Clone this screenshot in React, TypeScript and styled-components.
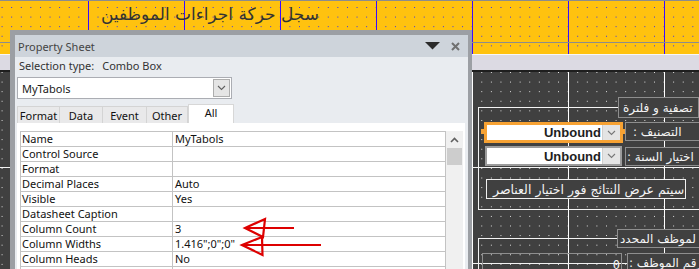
import React from "react";
import styled, { createGlobalStyle } from "styled-components";

const Global = createGlobalStyle`
  html, body { margin: 0; padding: 0; background: #404040; }
  body { width: 699px; height: 269px; overflow: hidden; }
  #root { width: 699px; height: 269px; }
`;

const UI = `"Noto Sans", "Open Sans", "DejaVu Sans", sans-serif`;
const AR = `"DejaVu Sans", "Noto Sans", sans-serif`;

const Stage = styled.div`
  position: relative;
  width: 699px;
  height: 269px;
  overflow: hidden;
  display: flex;
  flex-direction: column;
  font-family: ${UI};
`;

/* ---------- Access design surface ---------- */

const HeaderBand = styled.div`
  position: relative;
  flex: none;
  height: 54px;
  background-color: #ffc20f;
  background-image:
    linear-gradient(#8c8c8c, #8c8c8c),
    linear-gradient(#8c8c8c, #8c8c8c),
    linear-gradient(to right, #3a0cff 1px, transparent 1px),
    conic-gradient(from 270deg at 1px 1px, #2a2aff 90deg, transparent 0);
  background-size: 100% 1px, 100% 1px, 96px 100%, 9.6px 9.6px;
  background-position: 0 0, 0 42px, 88px 0, -8px 7px;
  background-repeat: no-repeat, no-repeat, repeat-x, repeat;
`;

const ReportTitle = styled.div`
  position: absolute;
  left: 96px;
  top: 4px;
  width: 228px;
  direction: rtl;
  text-align: center;
  font-family: ${AR};
  font-size: 17px;
  color: #333333;
  white-space: nowrap;
`;

const SectionBar = styled.div`
  flex: none;
  height: 15px;
  background: #dcdae3;
  border-top: 1px solid #f7f7f9;
  border-bottom: 2px solid #1e1e1e;
`;

const Detail = styled.div`
  position: relative;
  flex: 1;
  background-color: #404040;
  background-image:
    linear-gradient(to right, #ffffff 1px, transparent 1px),
    conic-gradient(from 270deg at 1px 1px, #e8e8e8 90deg, transparent 0);
  background-size: 96px 100%, 9.6px 9.6px;
  background-position: 88px 0, -8px 0px;
  background-repeat: repeat-x, repeat;
`;

const FrameBox = styled.div<{ $x: number; $y: number; $w: number; $h: number }>`
  position: absolute;
  left: ${(p) => p.$x}px;
  top: ${(p) => p.$y}px;
  width: ${(p) => p.$w}px;
  height: ${(p) => p.$h}px;
  border: 1px solid #f4f4f4;
  box-sizing: border-box;
`;

const HLine = styled.div<{ $x: number; $y: number; $w: number }>`
  position: absolute;
  left: ${(p) => p.$x}px;
  top: ${(p) => p.$y}px;
  width: ${(p) => p.$w}px;
  height: 1px;
  background: #f4f4f4;
`;

const CanvasLabel = styled.div<{
  $x: number;
  $y: number;
  $w: number;
  $h: number;
  $pad: number;
  $size?: number;
  $bright?: boolean;
}>`
  position: absolute;
  left: ${(p) => p.$x}px;
  top: ${(p) => p.$y}px;
  width: ${(p) => p.$w}px;
  height: ${(p) => p.$h}px;
  box-sizing: border-box;
  border: 1px solid ${(p) => (p.$bright ? "#f0f0f0" : "#8e8e8e")};
  background: #404040;
  display: flex;
  align-items: center;
  justify-content: flex-start;
  padding-left: ${(p) => p.$pad}px;
  font-family: ${AR};
  font-size: ${(p) => p.$size ?? 12}px;
  color: #f4f4f4;
  white-space: nowrap;
  overflow: hidden;
  direction: ltr;
  span { direction: rtl; unicode-bidi: isolate; }
`;

const CanvasCombo = styled.div<{
  $x: number;
  $y: number;
  $w: number;
  $h: number;
  $selected?: boolean;
}>`
  position: absolute;
  left: ${(p) => p.$x}px;
  top: ${(p) => p.$y}px;
  width: ${(p) => p.$w}px;
  height: ${(p) => p.$h}px;
  box-sizing: border-box;
  border: ${(p) => (p.$selected ? "3px solid #f7a233" : "2px solid #9c9c9c")};
  background: #ffffff;
  display: flex;
  align-items: stretch;
  justify-content: flex-end;
  font-family: "Liberation Sans", Arial, sans-serif;
  font-weight: bold;
  font-size: 13px;
  color: #1e1e1e;
`;

const ComboValue = styled.span`
  display: flex;
  align-items: center;
  padding-right: 1px;
`;

const CanvasComboButton = styled.span`
  width: 17px;
  background: #e4e4e4;
  border-left: 1px solid #cfcfcf;
  display: flex;
  align-items: center;
  justify-content: center;
`;

const Handle = styled.span<{ $x: number; $y: number }>`
  position: absolute;
  left: ${(p) => p.$x}px;
  top: ${(p) => p.$y}px;
  width: 4px;
  height: 5px;
  background: #f7a233;
`;

const CanvasTextBox = styled.div<{ $x: number; $y: number; $w: number; $h: number }>`
  position: absolute;
  left: ${(p) => p.$x}px;
  top: ${(p) => p.$y}px;
  width: ${(p) => p.$w}px;
  height: ${(p) => p.$h}px;
  box-sizing: border-box;
  border: 1px solid #8e8e8e;
  display: flex;
  justify-content: flex-end;
  align-items: flex-end;
  padding-right: 1px;
  font-family: "DejaVu Sans Mono", monospace;
  font-size: 12px;
  line-height: 14px;
  color: #f4f4f4;
`;

/* ---------- Property sheet window ---------- */

const SheetWindow = styled.div`
  position: absolute;
  left: 10px;
  top: 30px;
  width: 462px;
  height: 250px;
  box-sizing: border-box;
  border-left: 5px solid #9c9fa4;
  border-top: 5px solid #9c9fa4;
  border-right: 4px solid #9c9fa4;
  background: #e9ecf0;
  display: flex;
  flex-direction: column;
  font-family: ${UI};
  font-size: 11px;
  color: #1a1a1a;
`;

const TitleBar = styled.div`
  flex: none;
  height: 22px;
  background: #ced4db;
  display: flex;
  align-items: center;
  padding: 0 8px 0 3px;
  color: #444;
  font-size: 11px;
`;

const TitleText = styled.span`
  flex: 1;
`;

const TitleIcons = styled.span`
  display: flex;
  align-items: center;
  gap: 11px;
`;

const SheetBody = styled.div`
  flex: 1;
  display: flex;
  flex-direction: column;
  padding: 0 3px 0 2px;
  min-height: 0;
`;

const SelectionRow = styled.div`
  flex: none;
  height: 20px;
  box-sizing: border-box;
  padding: 0 0 4px 2px;
  display: flex;
  align-items: center;
  color: #333;
  gap: 8px;
  font-size: 11px;
`;

const ObjectCombo = styled.div`
  flex: none;
  width: 215px;
  height: 22px;
  box-sizing: border-box;
  border: 1px solid #abadb3;
  background: #fff;
  display: flex;
  align-items: center;
  padding: 0 1px 0 4px;
  font-size: 11px;
`;

const ObjectComboText = styled.span`
  flex: 1;
`;

const ObjectComboButton = styled.span`
  width: 17px;
  height: 18px;
  box-sizing: border-box;
  background: #e5e5e5;
  border: 1px solid #adadad;
  display: flex;
  align-items: center;
  justify-content: center;
`;

const TabRow = styled.div`
  flex: none;
  margin-top: 5px;
  height: 19px;
  display: flex;
  align-items: flex-end;
`;

const Tab = styled.div<{ $w: number; $active?: boolean }>`
  width: ${(p) => p.$w}px;
  height: ${(p) => (p.$active ? 19 : 17)}px;
  box-sizing: border-box;
  background: ${(p) => (p.$active ? "#ffffff" : "#e9e9ea")};
  border: 1px solid ${(p) => (p.$active ? "#d7d7d7" : "#d4d4d4")};
  border-bottom: none;
  border-left-width: ${(p) => (p.$active ? 1 : 0)}px;
  display: flex;
  align-items: ${(p) => (p.$active ? "flex-start" : "center")};
  justify-content: center;
  font-size: 11px;
  color: #111;
  line-height: 15px;
  &:first-child { border-left-width: 1px; }
`;

const PropertyPane = styled.div`
  flex: 1;
  width: 448px;
  background: #ffffff;
  display: flex;
  align-items: flex-start;
  padding: 8px 0 0 3px;
  box-sizing: border-box;
  min-height: 0;
`;

const PropertyGrid = styled.div`
  width: 426px;
  box-sizing: border-box;
  border: 1px solid #c3c3c3;
  border-bottom: none;
  display: grid;
  grid-template-columns: 152px 1fr;
`;

const Cell = styled.div<{ $name?: boolean }>`
  height: 15px;
  box-sizing: border-box;
  border-bottom: 1px solid #c3c3c3;
  border-right: ${(p) => (p.$name ? "1px solid #c3c3c3" : "none")};
  padding-left: ${(p) => (p.$name ? 1 : 2)}px;
  font-size: 11px;
  line-height: 14px;
  color: #111;
  white-space: nowrap;
  overflow: hidden;
`;

const ScrollBar = styled.div`
  width: 17px;
  align-self: stretch;
  background: #f0f0f0;
  display: flex;
  flex-direction: column;
  align-items: center;
`;

const ScrollArrow = styled.div`
  height: 17px;
  width: 100%;
  display: flex;
  align-items: center;
  justify-content: center;
`;

const ScrollThumb = styled.div`
  width: 15px;
  height: 17px;
  background: #cdcdcd;
`;

const Annotation = styled.svg`
  position: absolute;
  left: 238px;
  top: 214px;
  width: 90px;
  height: 45px;
  pointer-events: none;
  overflow: visible;
`;

const rows: [string, string][] = [
  ["Name", "MyTabols"],
  ["Control Source", ""],
  ["Format", ""],
  ["Decimal Places", "Auto"],
  ["Visible", "Yes"],
  ["Datasheet Caption", ""],
  ["Column Count", "3"],
  ["Column Widths", '1.416";0";0"'],
  ["Column Heads", "No"],
  ["List Rows", "16"],
];

const tabs: { label: string; w: number }[] = [
  { label: "Format", w: 43 },
  { label: "Data", w: 43 },
  { label: "Event", w: 44 },
  { label: "Other", w: 41 },
  { label: "All", w: 46 },
];

const Chevron = ({ color = "#5a5a5a" }: { color?: string }) => (
  <svg width="9" height="6" viewBox="0 0 9 6">
    <path d="M1 1 L4.5 4.5 L8 1" fill="none" stroke={color} strokeWidth="1.1" />
  </svg>
);

export default function App() {
  return (
    <>
      <Global />
      <Stage>
        <HeaderBand>
          <ReportTitle>سجل حركة اجراءات الموظفين</ReportTitle>
        </HeaderBand>
        <SectionBar />
        <Detail>
          <FrameBox $x={478} $y={35} $w={240} $h={103} />
          <HLine $x={0} $y={95} $w={699} />
          <FrameBox $x={478} $y={166} $w={240} $h={120} />
          <HLine $x={398} $y={191} $w={229} />

          <CanvasLabel $x={618} $y={25} $w={81} $h={21} $pad={4}>
            <span>تصفية و فلترة</span>
          </CanvasLabel>

          <CanvasCombo $x={484} $y={50} $w={139} $h={21} $selected>
            <ComboValue>Unbound</ComboValue>
            <CanvasComboButton>
              <Chevron color="#777" />
            </CanvasComboButton>
          </CanvasCombo>
          <Handle $x={481} $y={57} />
          <Handle $x={622} $y={57} />
          <CanvasLabel $x={625} $y={50} $w={80} $h={19} $pad={7}>
            <span>التصنيف :</span>
          </CanvasLabel>

          <CanvasCombo $x={485} $y={74} $w={137} $h={20}>
            <ComboValue>Unbound</ComboValue>
            <CanvasComboButton>
              <Chevron color="#777" />
            </CanvasComboButton>
          </CanvasCombo>
          <CanvasLabel $x={625} $y={75} $w={80} $h={19} $pad={1}>
            <span>اختيار السنة :</span>
          </CanvasLabel>

          <CanvasLabel $x={486} $y={107} $w={200} $h={20} $pad={6} $size={12.5} $bright>
            <span>سيتم عرض النتائج فور اختيار العناصر</span>
          </CanvasLabel>

          <CanvasLabel $x={617} $y={157} $w={90} $h={19} $pad={2}>
            <span>لموظف المحدد</span>
          </CanvasLabel>

          <CanvasTextBox $x={482} $y={181} $w={140} $h={20}>0</CanvasTextBox>
          <CanvasLabel $x={627} $y={181} $w={80} $h={20} $pad={1}>
            <span>رقم الموظف :</span>
          </CanvasLabel>
        </Detail>

        <SheetWindow>
          <TitleBar>
            <TitleText>Property Sheet</TitleText>
            <TitleIcons>
              <svg width="15" height="8" viewBox="0 0 15 8">
                <path d="M0 0 H15 L7.5 7.5 Z" fill="#2b2b2b" />
              </svg>
              <svg width="9" height="9" viewBox="0 0 9 9">
                <path d="M1 1 L8 8 M8 1 L1 8" stroke="#707070" strokeWidth="2" />
              </svg>
            </TitleIcons>
          </TitleBar>
          <SheetBody>
            <SelectionRow>
              <span>Selection type:</span>
              <span>Combo Box</span>
            </SelectionRow>
            <ObjectCombo>
              <ObjectComboText>MyTabols</ObjectComboText>
              <ObjectComboButton>
                <Chevron color="#606060" />
              </ObjectComboButton>
            </ObjectCombo>
            <TabRow>
              {tabs.map((t) => (
                <Tab key={t.label} $w={t.w} $active={t.label === "All"}>
                  {t.label}
                </Tab>
              ))}
            </TabRow>
            <PropertyPane>
              <PropertyGrid>
                {rows.map(([k, v]) => (
                  <React.Fragment key={k}>
                    <Cell $name>{k}</Cell>
                    <Cell>{v}</Cell>
                  </React.Fragment>
                ))}
              </PropertyGrid>
              <ScrollBar>
                <ScrollArrow>
                  <svg width="9" height="6" viewBox="0 0 9 6">
                    <path d="M1 5 L4.5 1.5 L8 5" fill="none" stroke="#606060" strokeWidth="1.6" />
                  </svg>
                </ScrollArrow>
                <ScrollThumb />
              </ScrollBar>
            </PropertyPane>
          </SheetBody>
        </SheetWindow>

        <Annotation viewBox="0 0 90 45">
          <g fill="none" stroke="#dd0000" strokeWidth="2.2" strokeLinejoin="miter">
            <path d="M7 14 H56" />
            <path d="M7 14 L27 5 L25 23 Z" />
            <path d="M4 31 H83" />
            <path d="M4 31 L24 23 L24.5 41 Z" />
          </g>
        </Annotation>
      </Stage>
    </>
  );
}
